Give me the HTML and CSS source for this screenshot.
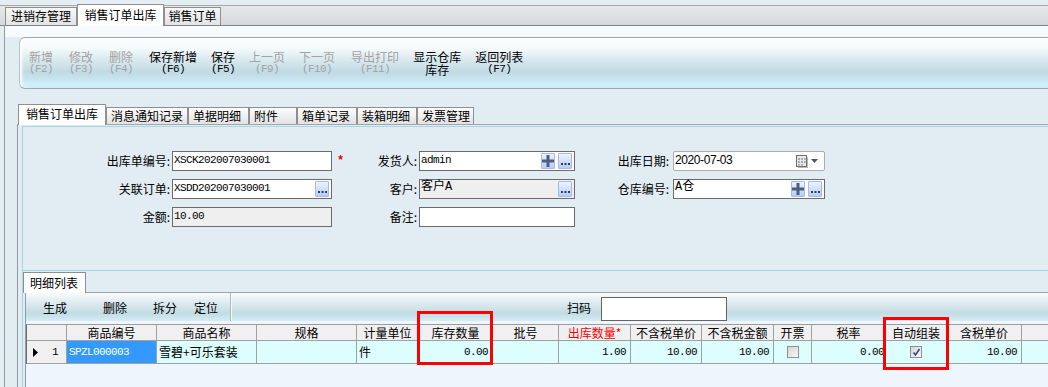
FILE: index.html
```html
<!DOCTYPE html>
<html lang="zh-CN">
<head>
  <meta charset="UTF-8" />
  <title>销售订单出库</title>
  <link rel="stylesheet" href="styles.css">
</head>
<body>
  <div class="top-tabs">
    <div class="top-tab t-stock">进销存管理</div>
    <div class="top-tab t-out active">销售订单出库</div>
    <div class="top-tab t-order">销售订单</div>
  </div>

  <div class="main">
    <div class="main-strip"></div>

    <div class="toolbar">
      <div class="tool off pad"><span>新增</span><span class="key">(F2)</span></div>
      <div class="tool off pad"><span>修改</span><span class="key">(F3)</span></div>
      <div class="tool off pad"><span>删除</span><span class="key">(F4)</span></div>
      <div class="tool"><span>保存新增</span><span class="key">(F6)</span></div>
      <div class="tool"><span>保存</span><span class="key">(F5)</span></div>
      <div class="tool off"><span>上一页</span><span class="key">(F9)</span></div>
      <div class="tool off pad"><span>下一页</span><span class="key">(F10)</span></div>
      <div class="tool off"><span>导出打印</span><span class="key">(F11)</span></div>
      <div class="tool"><span class="two">显示仓库<br>库存</span></div>
      <div class="tool"><span>返回列表</span><span class="key">(F7)</span></div>
    </div>

    <div class="sub">
      <div class="sub-tabs">
        <div class="sub-tab active">销售订单出库</div>
        <div class="sub-tab w-msg">消息通知记录</div>
        <div class="sub-tab w-doc">单据明细</div>
        <div class="sub-tab w-att">附件</div>
        <div class="sub-tab w-box">箱单记录</div>
        <div class="sub-tab w-pack">装箱明细</div>
        <div class="sub-tab w-inv">发票管理</div>
      </div>

      <div class="sub-panel">
        <div class="page">
          <!-- header form -->
          <div class="form">
            <div class="form-row">
              <span class="lbl c1">出库单编号:</span>
              <div class="field w1"><span class="val">XSCK202007030001</span></div>
              <span class="req">*</span>
              <span class="lbl c2">发货人:</span>
              <div class="field w2">
                <span class="val">admin</span>
                <span class="btn btn-add"><svg width="12" height="12" viewBox="0 0 12 12"><path d="M4.5 0h3v4.5H12v3H7.5V12h-3V7.5H0v-3h4.5z" fill="#4b5d80"/></svg></span>
                <span class="btn btn-more"><svg width="9" height="2" viewBox="0 0 9 2"><rect x="0" width="2" height="2"/><rect x="3.5" width="2" height="2"/><rect x="7" width="2" height="2"/></svg></span>
              </div>
              <span class="lbl c3">出库日期:</span>
              <div class="field w3 date">
                <span class="val">2020-07-03</span>
                <svg class="cal" width="12" height="13" viewBox="0 0 12 13">
                  <rect x="2" y="2" width="10" height="11" fill="#b9b9b9"/>
                  <rect x="0.5" y="0.5" width="10" height="11" fill="#e9e9e9" stroke="#6e6e6e"/>
                  <rect x="2" y="3" width="2" height="2" fill="#a9a9a9"/><rect x="5" y="3" width="2" height="2" fill="#a9a9a9"/><rect x="8" y="3" width="1.5" height="2" fill="#a9a9a9"/>
                  <rect x="2" y="6" width="2" height="2" fill="#a9a9a9"/><rect x="5" y="6" width="2" height="2" fill="#a9a9a9"/><rect x="8" y="6" width="1.5" height="2" fill="#a9a9a9"/>
                  <rect x="2" y="9" width="2" height="1.5" fill="#a9a9a9"/><rect x="5" y="9" width="2" height="1.5" fill="#a9a9a9"/>
                </svg>
                <svg class="drop" width="7" height="4" viewBox="0 0 7 4"><path d="M0 0h7L3.5 4z" fill="#4a5775"/></svg>
              </div>
            </div>

            <div class="form-row">
              <span class="lbl c1">关联订单:</span>
              <div class="field w1">
                <span class="val">XSDD202007030001</span>
                <span class="btn btn-more"><svg width="9" height="2" viewBox="0 0 9 2"><rect x="0" width="2" height="2"/><rect x="3.5" width="2" height="2"/><rect x="7" width="2" height="2"/></svg></span>
              </div>
              <span class="req"></span>
              <span class="lbl c2">客户:</span>
              <div class="field w2 off">
                <span class="val cjk">客户A</span>
                <span class="btn btn-more"><svg width="9" height="2" viewBox="0 0 9 2"><rect x="0" width="2" height="2"/><rect x="3.5" width="2" height="2"/><rect x="7" width="2" height="2"/></svg></span>
              </div>
              <span class="lbl c3">仓库编号:</span>
              <div class="field w3">
                <span class="val cjk">A仓</span>
                <span class="btn btn-add"><svg width="12" height="12" viewBox="0 0 12 12"><path d="M4.5 0h3v4.5H12v3H7.5V12h-3V7.5H0v-3h4.5z" fill="#4b5d80"/></svg></span>
                <span class="btn btn-more"><svg width="9" height="2" viewBox="0 0 9 2"><rect x="0" width="2" height="2"/><rect x="3.5" width="2" height="2"/><rect x="7" width="2" height="2"/></svg></span>
              </div>
            </div>

            <div class="form-row">
              <span class="lbl c1">金额:</span>
              <div class="field w1 off"><span class="val">10.00</span></div>
              <span class="req"></span>
              <span class="lbl c2">备注:</span>
              <div class="field w2"><span class="val"></span></div>
            </div>
          </div>

          <!-- detail list -->
          <div class="detail">
            <div class="detail-tabs">
              <div class="detail-tab">明细列表</div>
            </div>
            <div class="detail-panel">
              <div class="detail-bar">
                <span class="bar-btn b-gen">生成</span>
                <span class="bar-btn b-del">删除</span>
                <span class="bar-btn b-split">拆分</span>
                <span class="bar-btn b-loc">定位</span>
                <span class="bar-sep"></span>
                <span class="scan-lbl">扫码</span>
                <span class="scan-input"></span>
              </div>

              <div class="grid-area">
                <div class="grid">
                  <div class="hd"></div>
                  <div class="hd">商品编号</div>
                  <div class="hd">商品名称</div>
                  <div class="hd">规格</div>
                  <div class="hd">计量单位</div>
                  <div class="hd">库存数量</div>
                  <div class="hd">批号</div>
                  <div class="hd must">出库数量*</div>
                  <div class="hd">不含税单价</div>
                  <div class="hd">不含税金额</div>
                  <div class="hd">开票</div>
                  <div class="hd">税率</div>
                  <div class="hd">自动组装</div>
                  <div class="hd">含税单价</div>
                  <div class="hd"></div>

                  <div class="rowhd">
                    <svg width="5" height="9" viewBox="0 0 5 9"><path d="M0 0l5 4.5L0 9z" fill="#000"/></svg>
                    <span class="mono">1</span>
                  </div>
                  <div class="cell sel mono">SPZL000003</div>
                  <div class="cell">雪碧+可乐套装</div>
                  <div class="cell"></div>
                  <div class="cell">件</div>
                  <div class="cell num">0.00</div>
                  <div class="cell"></div>
                  <div class="cell num">1.00</div>
                  <div class="cell num">10.00</div>
                  <div class="cell num">10.00</div>
                  <div class="cell center"><span class="chk"></span></div>
                  <div class="cell num tight">0.00</div>
                  <div class="cell center">
                    <span class="chk"><svg width="9" height="9" viewBox="0 0 9 9"><path d="M1.5 4.5l2 2.5L7.5 1" fill="none" stroke="#2f4a8f" stroke-width="1.6"/></svg></span>
                  </div>
                  <div class="cell num">10.00</div>
                  <div class="cell"></div>
                </div>
              </div>
            </div>
          </div>
        </div>
      </div>
    </div>
  </div>

  <!-- red highlight frames -->
  <div class="mark mark-stock"></div>
  <div class="mark mark-auto"></div>
</body>
</html>
```

FILE: styles.css
```css
* {
  box-sizing: border-box;
  margin: 0;
  padding: 0;
}

body {
  position: relative;
  width: 1048px;
  height: 387px;
  overflow: hidden;
  background: #e5eff3;
  font-family: "Noto Sans CJK SC", "Liberation Sans", sans-serif;
  font-size: 12px;
  color: #000;
}

/* top window tabs */
.top-tabs {
  display: flex;
  align-items: flex-end;
  height: 21px;
  margin-top: 5px;
  padding-left: 5px;
  border-top: 1px solid #a2a8ad;
  border-bottom: 1px solid #7e868c;
  background: linear-gradient(#e7e8ea, #d5d8dc);
}

.top-tab {
  height: 18px;
  border: 1px solid #8b9095;
  border-bottom: none;
  background: linear-gradient(#f7f7f7, #e3e3e3);
  text-align: center;
  line-height: 16px;
}

.top-tab.t-stock { width: 72px; }
.top-tab.t-out { width: 87px; }
.top-tab.t-order { width: 57px; }

.top-tab.active {
  position: relative;
  height: 22px;
  margin-bottom: -1px;
  background: #fff;
  line-height: 19px;
}

.main {
  height: 361px;
  margin-left: 4px;
  border-left: 1px solid #8e9ba3;
  background: #e2edf3;
}

.main-strip {
  height: 11px;
  background: #f8fbfd;
}

/* main toolbar */
.toolbar {
  display: flex;
  align-items: center;
  gap: 14px;
  height: 52px;
  margin-left: 14px;
  padding-left: 9px;
  border: 1px solid #a0a6ab;
  border-right: none;
  border-left-color: #b5c2c8;
  border-radius: 6px 0 0 6px;
  box-shadow: inset 4px 0 3px -2px #fff;
  background: linear-gradient(#fcfdfe 0%, #f6fafb 20%, #d7e8ee 45%, #c1dae3 68%, #c7e4ee 82%, #cff0fb 92%, #cdeffa 100%);
}

.tool {
  display: flex;
  flex-direction: column;
  align-items: center;
  line-height: 13px;
  color: #000;
}

.tool .two {
  text-align: center;
}

.tool.pad {
  margin-right: 2px;
}

.tool.off {
  color: #a3a3a3;
}

.key {
  font-family: "Liberation Mono", monospace;
  font-size: 11px;
  letter-spacing: -0.6px;
}

/* inner tab control */
.sub {
  margin: 15px 0 0 12px;
}

.sub-tabs {
  display: flex;
  align-items: flex-end;
  height: 21px;
  padding-left: 1px;
  border-bottom: 1px solid #9fa5aa;
}

.sub-tab {
  height: 17px;
  padding-left: 4px;
  border: 1px solid #8f8f8f;
  border-bottom: none;
  background: linear-gradient(#fefefe, #e2e2e2);
  line-height: 15px;
}

.sub-tab.active {
  width: 88px;
  height: 21px;
  margin-bottom: -1px;
  padding-left: 7px;
  background: #fff;
  line-height: 18px;
}

.w-msg { width: 82px; }
.w-doc { width: 61px; }
.w-att { width: 48px; }
.w-box { width: 60px; }
.w-pack { width: 60px; }
.w-inv { width: 57px; }

.sub-panel {
  height: 262px;
  padding: 1px 0 0 4px;
  border-left: 1px solid #8f9aa2;
}

.page {
  height: 100%;
  border-left: 1px solid #a6d5e6;
  border-top: 1px solid #a6d5e6;
}

/* header form */
.form {
  height: 144px;
  padding-top: 24px;
  border-bottom: 1px solid #a6d5e6;
}

.form-row {
  display: flex;
  align-items: center;
  height: 20px;
  margin-bottom: 8px;
}

.lbl {
  text-align: right;
  line-height: 20px;
}

.lbl.c1 { width: 147px; margin-right: 2px; }
.lbl.c2 { width: 72px; margin-right: 2px; }
.lbl.c3 { width: 98px; padding-right: 4px; }

.req {
  width: 13px;
  padding-left: 5px;
  color: #e00;
  font-family: "Liberation Mono", monospace;
  font-size: 12px;
  font-weight: bold;
  line-height: 20px;
}

.field {
  display: flex;
  align-items: center;
  height: 20px;
  padding: 0 2px 0 1px;
  border: 1px solid #6b6b6b;
  background: #fff;
}

.field.off { background: #efefef; }
.field.w1 { width: 160px; }
.field.w2 { width: 156px; }
.field.w3 { width: 152px; }

.field.date {
  border-color: #adadad;
  border-radius: 2px;
}

.val {
  flex: 1;
  align-self: flex-start;
  padding-top: 1px;
  font-family: "Liberation Mono", "Noto Sans CJK SC", monospace;
  font-size: 11px;
  letter-spacing: -0.6px;
  line-height: 14px;
  white-space: nowrap;
}

.val.cjk {
  font-size: 12px;
  letter-spacing: 0;
  line-height: 13px;
}

.date .val {
  font-family: "Liberation Sans", sans-serif;
  font-size: 12px;
  letter-spacing: -0.4px;
  line-height: 16px;
  padding-top: 0;
}

.date .cal { margin-right: 3px; }
.date .drop { margin-right: 4px; }

.btn {
  display: flex;
  align-items: center;
  justify-content: center;
  width: 14px;
  height: 16px;
  margin-left: 3px;
  border: 1px solid #a3bbe6;
  border-radius: 1px;
  background: linear-gradient(#eef3fd, #b8ccf4);
}

.btn-more {
  align-items: flex-end;
  padding-bottom: 3px;
}

.btn-more svg { fill: #2f3d5a; }

/* detail list */
.detail {
  margin-top: 1px;
}

.detail-tabs {
  display: flex;
  align-items: flex-end;
  height: 21px;
  border-bottom: 1px solid #9fa5aa;
}

.detail-tab {
  width: 63px;
  height: 21px;
  margin-bottom: -1px;
  padding-left: 6px;
  border: 1px solid #8f8f8f;
  border-bottom: none;
  background: #fff;
  line-height: 19px;
}

.detail-panel {
  margin-left: 2px;
  border-left: 1px solid #8f9aa2;
}

.detail-bar {
  display: flex;
  height: 28px;
  background: linear-gradient(#f8fbfc 0%, #e5eff3 25%, #c3dbe3 72%, #d4edf6 100%);
}

.bar-btn {
  text-align: center;
  line-height: 30px;
}

.b-gen { width: 58px; }
.b-del { width: 62px; }
.b-split { width: 38px; }
.b-loc { width: 44px; }

.bar-sep {
  width: 2px;
  margin-left: 2px;
  border-left: 1px solid #a9b9c1;
  border-right: 1px solid #f6fafb;
}

.scan-lbl {
  margin-left: 335px;
  line-height: 30px;
}

.scan-input {
  width: 126px;
  height: 24px;
  margin: 4px 0 0 10px;
  border: 1px solid #646464;
  background: #fff;
}

.grid-area {
  height: 70px;
  padding-top: 3px;
  background: #eef5fc;
}

.grid {
  display: grid;
  grid-template-columns: 40px 90px 100px 100px 62px 74px 66px 72px 71px 72px 38px 74px 61px 75px 60px;
  width: max-content;
  border-left: 1px solid #6f6f6f;
  border-top: 1px solid #9c9c9c;
}

.hd {
  height: 16px;
  border-right: 1px solid #a0a0a0;
  border-bottom: 1px solid #a0a0a0;
  background: #f0f0f0;
  text-align: center;
  line-height: 15px;
  white-space: nowrap;
}

.hd.must { color: #f00; }

.rowhd {
  display: flex;
  align-items: center;
  justify-content: space-between;
  height: 23px;
  padding: 0 8px 0 6px;
  border-right: 1px solid #a0a0a0;
  border-bottom: 1px solid #a0a0a0;
  background: #f0f0f0;
}

.cell {
  height: 23px;
  padding: 0 2px;
  border-right: 1px solid #a0a0a0;
  border-bottom: 1px solid #a0a0a0;
  background: #dcfefe;
  line-height: 22px;
  white-space: nowrap;
}

.mono {
  font-family: "Liberation Mono", monospace;
  font-size: 11px;
  letter-spacing: -0.6px;
}

.cell.sel {
  background: #3399ff;
  color: #fff;
}

.cell.num {
  padding-right: 4px;
  text-align: right;
  font-family: "Liberation Mono", monospace;
  font-size: 11px;
  letter-spacing: -0.6px;
}

.cell.num.tight { padding-right: 1px; }

.cell.center {
  display: flex;
  align-items: center;
  justify-content: center;
}

.chk {
  display: flex;
  align-items: center;
  justify-content: center;
  width: 12px;
  height: 12px;
  border: 1px solid #8e8f8f;
  background: linear-gradient(135deg, #d4d4d4, #f8f8f8);
}

/* red highlight frames over the grid */
.mark {
  position: absolute;
  border: 3px solid #f00;
}

.mark-stock {
  left: 417px;
  top: 311px;
  width: 76px;
  height: 54px;
}

.mark-auto {
  left: 883px;
  top: 317px;
  width: 66px;
  height: 53px;
}
```
